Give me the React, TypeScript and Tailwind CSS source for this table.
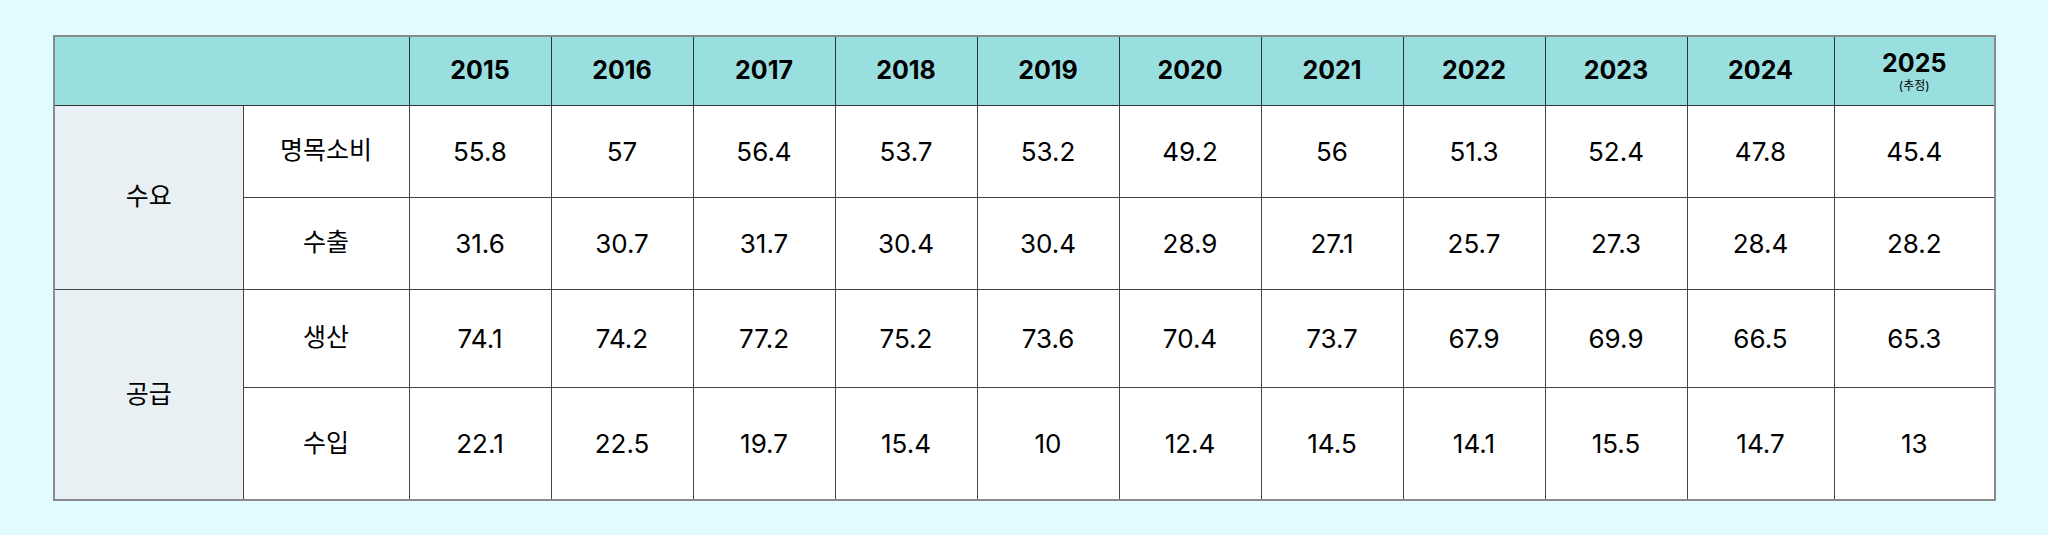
const years = ["2015", "2016", "2017", "2018", "2019", "2020", "2021", "2022", "2023", "2024", "2025"];

const groups = [
  {
    name: "수요",
    rows: [
      { label: "명목소비", values: ["55.8", "57", "56.4", "53.7", "53.2", "49.2", "56", "51.3", "52.4", "47.8", "45.4"], h: "h-[92px]" },
      { label: "수출", values: ["31.6", "30.7", "31.7", "30.4", "30.4", "28.9", "27.1", "25.7", "27.3", "28.4", "28.2"], h: "h-[92px]" },
    ],
  },
  {
    name: "공급",
    rows: [
      { label: "생산", values: ["74.1", "74.2", "77.2", "75.2", "73.6", "70.4", "73.7", "67.9", "69.9", "66.5", "65.3"], h: "h-[98px]" },
      { label: "수입", values: ["22.1", "22.5", "19.7", "15.4", "10", "12.4", "14.5", "14.1", "15.5", "14.7", "13"], h: "h-[113px]" },
    ],
  },
];

export default function App() {
  return (
    <div
      className="w-[2048px] h-[535px] bg-[#e1fbfe] pt-[35px] pl-[53px]"
      style={{ fontFamily: 'Inter, "Noto Sans CJK KR", sans-serif' }}
    >
      <table className="table-fixed border-collapse w-[1943px] border-2 border-[#8a8a8a] text-black">
        <colgroup>
          <col className="w-[189px]" />
          <col className="w-[166px]" />
          {years.slice(0, 9).map((y) => (
            <col key={y} className="w-[142px]" />
          ))}
          <col className="w-[147px]" />
          <col className="w-[161px]" />
        </colgroup>
        <thead>
          <tr className="h-[69px] bg-[#9adfdf]">
            <th colSpan={2} className="border border-[#333]"></th>
            {years.map((y) => (
              <th key={y} className="border border-[#333] text-[25px] font-bold leading-none">
                {y === "2025" ? (
                  <div className="flex flex-col items-center pt-[2px]">
                    <span>2025</span>
                    <span className="text-[12px] font-normal mt-[4px]">(추정)</span>
                  </div>
                ) : (
                  y
                )}
              </th>
            ))}
          </tr>
        </thead>
        <tbody>
          {groups.map((g) =>
            g.rows.map((r, i) => (
              <tr key={r.label} className={`${r.h} bg-white`}>
                {i === 0 && (
                  <td rowSpan={2} className="border border-[#444] bg-[#e8f0f3] text-center text-[25px]">
                    {g.name}
                  </td>
                )}
                <td className="border border-[#444] text-center text-[25px]">{r.label}</td>
                {r.values.map((v, j) => (
                  <td key={j} className="border border-[#444] text-center text-[26px]">
                    {v}
                  </td>
                ))}
              </tr>
            ))
          )}
        </tbody>
      </table>
    </div>
  );
}
